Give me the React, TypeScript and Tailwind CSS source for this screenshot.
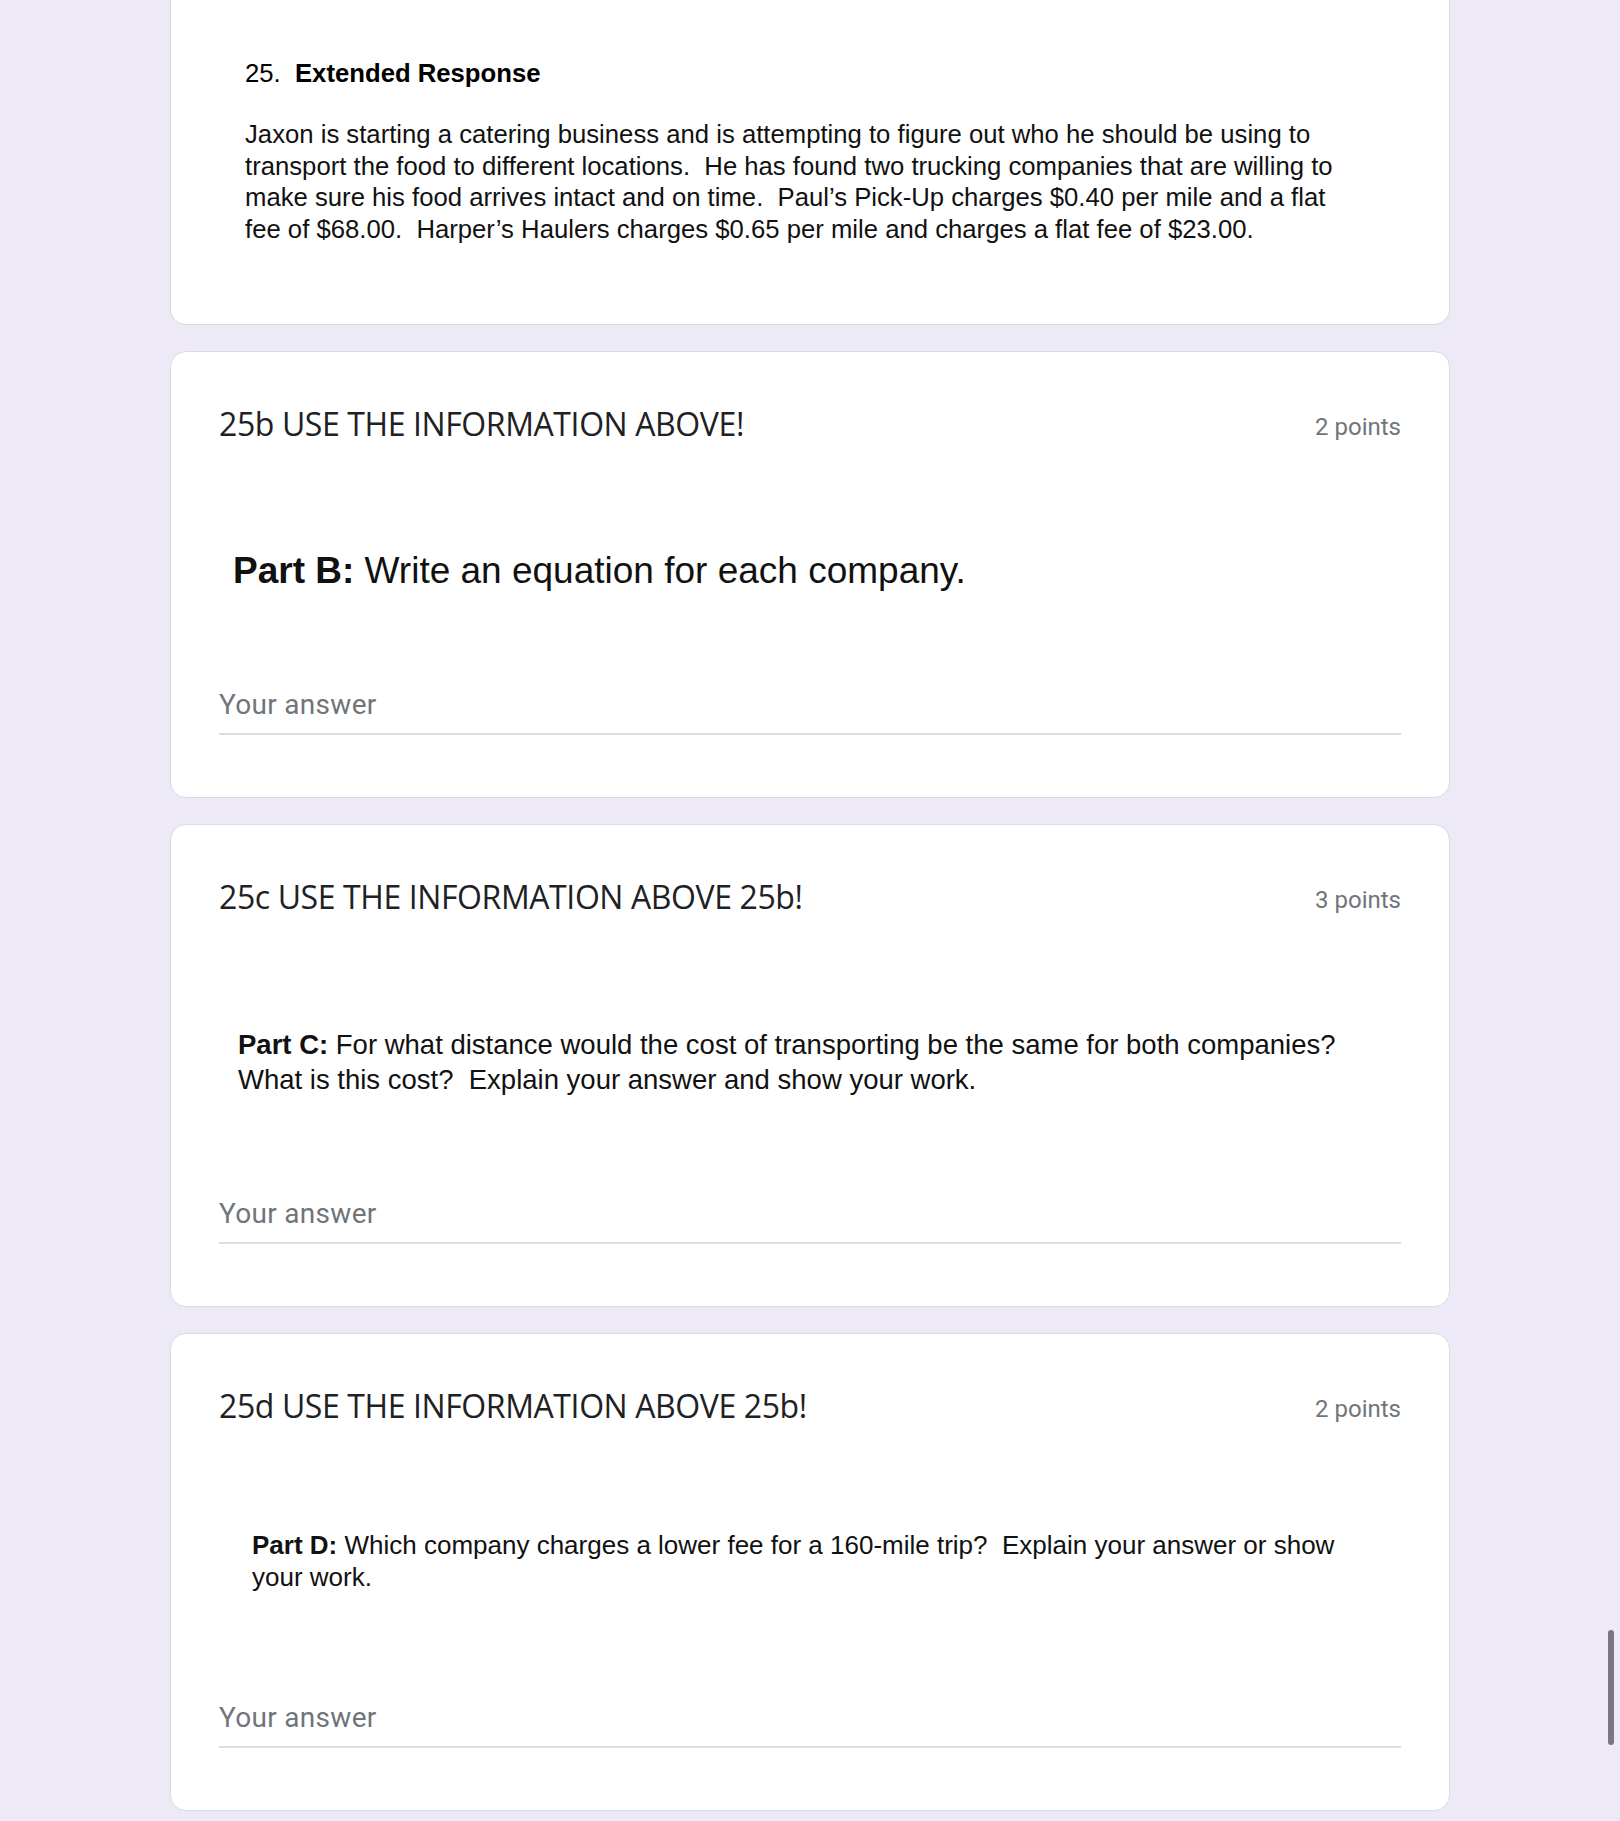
import React from 'react';

const docFont = { fontFamily: '"Liberation Sans", Arial, sans-serif' };

type QuestionCardProps = {
  title: string;
  points: string;
  imageHeight: string;
  children: React.ReactNode;
};

const QuestionCard = ({ title, points, imageHeight, children }: QuestionCardProps) => {
  return (
    <div className="w-[1280px] bg-white border border-[#dadce0] rounded-[16px] px-[48px] pt-[48px] pb-[62px]">
      <div className="flex items-center justify-between h-[48px]">
        <div className="text-[32px] leading-[48px] text-[#202124] font-['Open_Sans',sans-serif] tracking-[-0.4px]">
          {title}
        </div>
        <div className="mt-[6px] text-[24px] text-[#70757a] font-['Roboto',sans-serif]">{points}</div>
      </div>
      <div className={imageHeight}>{children}</div>
      <div className="h-[58px] border-b-2 border-[#dadce0] flex items-center">
        <span className="text-[28px] text-[#70757a] font-['Roboto',sans-serif] tracking-[0.3px]">Your answer</span>
      </div>
    </div>
  );
};

export default function App() {
  return (
    <div className="min-h-screen bg-[#ede9f7] pb-[10px]">
      <div className="flex flex-col items-center gap-[26px]">
        {/* top card, scrolled partly out of view */}
        <div className="w-[1280px] h-[325px] bg-white border border-t-0 border-[#dadce0] rounded-b-[16px] px-[74px] pt-[56px]" style={docFont}>
          <div className="text-[25.7px] text-black leading-[34px]">
            25.&nbsp;&nbsp;<span className="font-bold">Extended Response</span>
          </div>
          <div className="mt-[29px] text-[25.7px] leading-[31.7px] text-[#111] whitespace-nowrap">
            Jaxon is starting a catering business and is attempting to figure out who he should be using to<br />
            transport the food to different locations.&nbsp; He has found two trucking companies that are willing to<br />
            make sure his food arrives intact and on time.&nbsp; Paul’s Pick-Up charges $0.40 per mile and a flat<br />
            fee of $68.00.&nbsp; Harper’s Haulers charges $0.65 per mile and charges a flat fee of $23.00.
          </div>
        </div>

        <QuestionCard title="25b USE THE INFORMATION ABOVE!" points="2 points" imageHeight="h-[229px] pt-[102px] pl-[14px]">
          <div className="text-[37px] leading-[42px] text-[#111] whitespace-nowrap" style={docFont}>
            <span className="font-bold">Part B:</span> Write an equation for each company.
          </div>
        </QuestionCard>

        <QuestionCard title="25c USE THE INFORMATION ABOVE 25b!" points="3 points" imageHeight="h-[265px] pt-[106px] pl-[19px]">
          <div className="text-[27.5px] leading-[35px] text-[#111] whitespace-nowrap" style={docFont}>
            <span className="font-bold">Part C:</span> For what distance would the cost of transporting be the same for both companies?<br />
            What is this cost?&nbsp; Explain your answer and show your work.
          </div>
        </QuestionCard>

        <QuestionCard title="25d USE THE INFORMATION ABOVE 25b!" points="2 points" imageHeight="h-[260px] pt-[99px] pl-[33px]">
          <div className="text-[26px] leading-[32px] text-[#111] whitespace-nowrap" style={docFont}>
            <span className="font-bold">Part D:</span> Which company charges a lower fee for a 160-mile trip?&nbsp; Explain your answer or show<br />
            your work.
          </div>
        </QuestionCard>
      </div>

      {/* overlay scrollbar */}
      <div className="fixed right-[6px] top-[1630px] w-[6px] h-[115px] rounded-full bg-[#7a757f]" />
    </div>
  );
}
